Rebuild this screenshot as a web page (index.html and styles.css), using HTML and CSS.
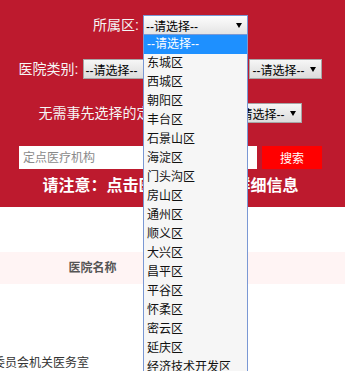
FILE: index.html
```html
<!DOCTYPE html>
<html lang="zh-cn">
<head>
    <meta charset="UTF-8">
    <meta name="viewport" content="width=device-width, initial-scale=1.0">
    <title>定点医疗机构查询</title>
    <link rel="stylesheet" href="styles.css">
</head>
<body>
    <div class="topo">
        <div class="linha">
            <label>所属区:</label>
            <span class="sel sel-larga ativa">--请选择--<i></i></span>
        </div>
        <div class="linha">
            <label>医院类别:</label>
            <span class="sel">--请选择--<i></i></span>
            <label class="esp">医院等级:</label>
            <span class="sel">--请选择--<i></i></span>
        </div>
        <div class="linha">
            <label>无需事先选择的定点医疗机构:</label>
            <span class="sel">--请选择--<i></i></span>
        </div>
        <div class="busca">
            <input type="text" placeholder="定点医疗机构">
            <button>搜索</button>
        </div>
        <p class="aviso">请注意：点击医院名称查看详细信息</p>
    </div>

    <div class="cabecalho"><span>医院名称</span></div>
    <div class="item">中共北京市委员会机关医务室</div>

    <!-- lista aberta do primeiro select -->
    <ul class="opcoes">
        <li class="marcada">--请选择--</li>
        <li>东城区</li>
        <li>西城区</li>
        <li>朝阳区</li>
        <li>丰台区</li>
        <li>石景山区</li>
        <li>海淀区</li>
        <li>门头沟区</li>
        <li>房山区</li>
        <li>通州区</li>
        <li>顺义区</li>
        <li>大兴区</li>
        <li>昌平区</li>
        <li>平谷区</li>
        <li>怀柔区</li>
        <li>密云区</li>
        <li>延庆区</li>
        <li>经济技术开发区</li>
    </ul>
</body>
</html>
```

FILE: styles.css
```css
body {
    font-family: "Liberation Sans", "Noto Sans CJK SC", sans-serif;
    margin: 0;
    padding: 0;
    color: #333;
    background: #fff;
    position: relative;
    overflow: hidden;
}
.topo {
    background: #bd1a2e;
    width: 341px;
    padding: 15px 4px 11px 0;
}
.linha {
    display: flex;
    justify-content: center;
    align-items: center;
    height: 20px;
    margin-bottom: 24px;
    gap: 4px;
}
.linha:nth-child(3) {
    margin-bottom: 0;
    gap: 5px;
}
.linha label {
    color: #f6f6f6;
    font-size: 14px;
    line-height: 20px;
    white-space: nowrap;
}
.linha .esp {
    margin-left: 26px;
}
.sel {
    box-sizing: border-box;
    width: 73px;
    height: 20px;
    display: inline-flex;
    align-items: center;
    justify-content: space-between;
    padding: 0 5px 0 2px;
    border: 1px solid #a6a6a6;
    background: linear-gradient(#f6f6f6, #dcdcdc);
    color: #000;
    font-size: 12px;
    white-space: nowrap;
}
.sel i {
    width: 0;
    height: 0;
    border-left: 3px solid transparent;
    border-right: 3px solid transparent;
    border-top: 5px solid #000;
}
.sel-larga {
    width: 105px;
}
.ativa {
    border-color: #7a98d4;
    background: linear-gradient(#fdfdfd, #e4e4e4);
}
.busca {
    display: flex;
    justify-content: center;
    gap: 5px;
    margin-top: 23px;
}
.busca input {
    box-sizing: border-box;
    width: 238px;
    height: 23px;
    border: none;
    padding: 0 4px;
    font-family: inherit;
    font-size: 12px;
    outline: none;
}
.busca input::placeholder {
    color: #8a8a8a;
}
.busca button {
    width: 60px;
    height: 23px;
    border: none;
    background: #ff0000;
    color: #fff;
    font-family: inherit;
    font-size: 12px;
    padding: 0;
}
.aviso {
    margin: 7px 0 0;
    text-align: center;
    color: #fff;
    font-size: 16px;
    font-weight: bold;
    line-height: 20px;
    white-space: nowrap;
}
.cabecalho {
    margin-top: 45px;
    height: 32px;
    background: #fff4f4;
}
.cabecalho span {
    display: inline-block;
    width: 185px;
    text-align: center;
    line-height: 32px;
    font-size: 12px;
    font-weight: bold;
    color: #555;
}
.item {
    margin-top: 71px;
    line-height: 16px;
    font-size: 12px;
    color: #333;
    white-space: nowrap;
    text-indent: -67px;
}
.opcoes {
    position: absolute;
    left: 143px;
    top: 34px;
    width: 105px;
    box-sizing: border-box;
    margin: 0;
    padding: 0;
    list-style: none;
    border: 1px solid #7a98d4;
    background: #f6f6f6;
}
.opcoes li {
    height: 19px;
    line-height: 19px;
    padding-left: 3px;
    font-size: 12px;
    color: #111;
    white-space: nowrap;
}
.opcoes .marcada {
    background: #1e90ff;
    color: #fff;
}
```
